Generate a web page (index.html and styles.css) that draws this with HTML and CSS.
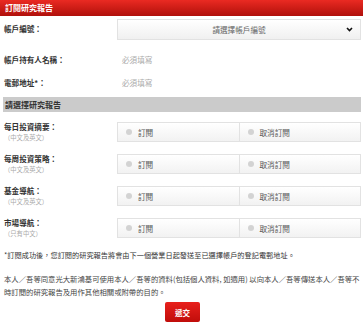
FILE: index.html
```html
<!DOCTYPE html>
<html lang="zh-Hant">

<head>
    <meta charset="UTF-8">
    <title>訂閱研究報告</title>
    <link rel="stylesheet" href="styles.css">
</head>

<body>
<div class="title">訂閱研究報告</div>
<div class="form">
    <div class="row">
        <div class="label">帳戶編號：</div>
        <div class="select">
            <span></span>
            <span class="selText">請選擇帳戶編號</span>
            <svg class="arrow" width="7" height="5" viewBox="0 0 7 5"><path d="M1 1 L3.5 3.5 L6 1" fill="none" stroke="#111" stroke-width="1.6"/></svg>
        </div>
    </div>
    <div class="row plain first">
        <div class="label">帳戶持有人名稱：</div>
        <div class="value">必須填寫</div>
    </div>
    <div class="row plain">
        <div class="label">電郵地址*：</div>
        <div class="value">必須填寫</div>
    </div>

    <div class="bar">請選擇研究報告</div>

    <div class="row report">
        <div class="label">每日投資摘要：<span class="sub">（中文及英文）</span></div>
        <div class="options">
            <label class="opt"><i class="radio"></i>訂閱</label>
            <label class="opt"><i class="radio"></i>取消訂閱</label>
        </div>
    </div>
    <div class="row report">
        <div class="label">每周投資策略：<span class="sub">（中文及英文）</span></div>
        <div class="options">
            <label class="opt"><i class="radio"></i>訂閱</label>
            <label class="opt"><i class="radio"></i>取消訂閱</label>
        </div>
    </div>
    <div class="row report">
        <div class="label">基金導航：<span class="sub">（中文及英文）</span></div>
        <div class="options">
            <label class="opt"><i class="radio"></i>訂閱</label>
            <label class="opt"><i class="radio"></i>取消訂閱</label>
        </div>
    </div>
    <div class="row report">
        <div class="label">市場導航：<span class="sub">（只有中文）</span></div>
        <div class="options">
            <label class="opt"><i class="radio"></i>訂閱</label>
            <label class="opt"><i class="radio"></i>取消訂閱</label>
        </div>
    </div>

    <p class="note">*訂閱成功後，您訂閱的研究報告將會由下一個營業日起發送至已選擇帳戶的登記電郵地址。</p>
    <p class="terms">本人／吾等同意光大新鴻基可使用本人／吾等的資料(包括個人資料, 如適用) 以向本人／吾等傳送本人／吾等不時訂閱的研究報告及用作其他相關或附帶的目的。</p>

    <div class="submit"><button class="send">遞交</button></div>
</div>
</body>

</html>
```

FILE: styles.css
```css
body {
    margin: 0;
    font-family: "Noto Sans CJK TC", "Noto Sans CJK SC", sans-serif;
    font-size: 7.6px;
    color: #333;
}

.title {
    height: 16px;
    line-height: 16px;
    padding-left: 5px;
    background: linear-gradient(#ea2a22, #b0100b);
    color: #fff;
    font-size: 8px;
    font-weight: bold;
}

.form {
    padding: 0 2px 0 4px;
}

.row {
    display: flex;
    align-items: center;
}

.label {
    width: 113px;
    font-weight: bold;
    color: #333;
}

.select {
    flex: 1;
    margin-top: 3px;
    height: 19px;
    border: 1px solid #e2e2e2;
    background: linear-gradient(#fff, #f0f0f0);
    display: grid;
    grid-template-columns: 1fr auto 1fr;
    align-items: center;
    color: #666;
}

.select .arrow {
    justify-self: end;
    margin-right: 7px;
}

.plain {
    height: 23px;
}

.plain.first {
    margin-top: 8px;
}

.value {
    padding-left: 5px;
    color: #aaa;
}

.bar {
    margin: 3px 0 0 -1px;
    height: 15px;
    line-height: 15px;
    padding-left: 2px;
    background: #cbcbcb;
    font-weight: bold;
    font-size: 8px;
    color: #333;
}

.report {
    align-items: flex-start;
    margin-top: 11px;
}

.bar + .report {
    margin-top: 10px;
}

.report .label {
    line-height: 11px;
    margin-top: -1px;
}

.sub {
    display: block;
    font-weight: normal;
    font-size: 6.3px;
    color: #aaa;
}

.options {
    flex: 1;
    display: flex;
    height: 18px;
    border: 1px solid #e2e2e2;
    background: linear-gradient(#fff, #f2f2f2);
}

.opt {
    flex: 1;
    display: flex;
    align-items: center;
    padding-left: 8px;
    color: #555;
}

.opt + .opt {
    border-left: 1px solid #e2e2e2;
}

.radio {
    width: 6px;
    height: 6px;
    margin-right: 6px;
    border-radius: 50%;
    background: #d3d3d3;
}

.note {
    margin: 10px 0 0;
    line-height: 13px;
    font-size: 7.2px;
}

.terms {
    margin: 10px 0 0;
    line-height: 13px;
    font-size: 7.35px;
    color: #444;
}

.submit {
    text-align: center;
    margin-top: 4px;
}

.send {
    width: 35px;
    height: 20px;
    border: none;
    border-radius: 2px;
    background: linear-gradient(#e8201c, #c00d0a);
    color: #fff;
    font-family: inherit;
    font-size: 7.6px;
    font-weight: bold;
    padding: 0;
}
```
